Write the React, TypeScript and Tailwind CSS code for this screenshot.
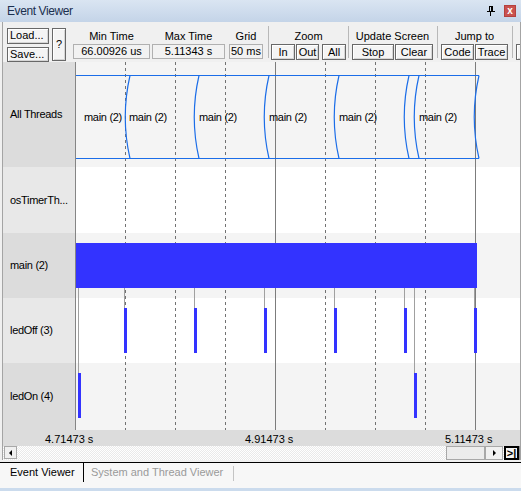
import React from 'react'

const rows = [
  { label: 'All Threads', h: 'h-[105px]', bg: 'bg-[#f4f4f4]', lbg: 'bg-[#dcdcdc]' },
  { label: 'osTimerTh...', h: 'h-[66px]', bg: 'bg-white', lbg: 'bg-[#e8e8e8]' },
  { label: 'main (2)', h: 'h-[65px]', bg: 'bg-[#f4f4f4]', lbg: 'bg-[#dcdcdc]' },
  { label: 'ledOff (3)', h: 'h-[65px]', bg: 'bg-white', lbg: 'bg-[#e8e8e8]' },
  { label: 'ledOn (4)', h: 'h-[67px]', bg: 'bg-[#f4f4f4]', lbg: 'bg-[#dcdcdc]' },
]

// plot coordinates, origin at the top-left of the timeline area
const dashed = [49, 99, 149, 249, 299, 349]
const solid = [199, 399]
const switches = [49, 118, 188, 258, 328, 338, 398]
const mainLabels = [8, 53, 123, 193, 263, 343]
const ledOff = [48, 118, 188, 258, 328, 398]
const ledOn = [2, 338]

function Btn({ children, className = '' }: { children?: React.ReactNode; className?: string }) {
  return (
    <div
      className={`flex h-[16px] items-center justify-center border border-[#686868] bg-[#f4f4f4] text-[11px] leading-none text-black shadow-[inset_1px_1px_0_#ffffff,inset_-1px_-1px_0_#d6d6d6] ${className}`}
    >
      {children}
    </div>
  )
}

function Field({ children, className = '' }: { children: React.ReactNode; className?: string }) {
  return (
    <div
      className={`flex h-[15px] items-center justify-center border border-[#b0b0b0] bg-[#f2f2f2] text-[11px] leading-none text-black ${className}`}
    >
      {children}
    </div>
  )
}

function Group({ title, children }: { title: string; children: React.ReactNode }) {
  return (
    <div className="flex flex-col items-center pt-[7px]">
      <div className="h-[14px] whitespace-nowrap text-[11px] leading-[14px] text-black">{title}</div>
      <div className="mt-[1px] flex">{children}</div>
    </div>
  )
}

function Sep({ className = '' }: { className?: string }) {
  return <div className={`my-[4px] w-px shrink-0 bg-[#b8b8b8] ${className}`} />
}

function Timeline() {
  return (
    <svg className="absolute inset-0" width="443" height="368" fontFamily="'Liberation Sans', Arial, sans-serif">
      {dashed.map((x) => (
        <line key={x} x1={x + 0.5} y1={0} x2={x + 0.5} y2={368} stroke="#727272" strokeDasharray="3 3" />
      ))}
      {solid.map((x) => (
        <line key={x} x1={x + 0.5} y1={0} x2={x + 0.5} y2={368} stroke="#7c7c7c" />
      ))}

      {/* All Threads strip */}
      <line x1={0} y1={13.5} x2={403} y2={13.5} stroke="#1b6de8" />
      <line x1={0} y1={96.5} x2={403} y2={96.5} stroke="#1b6de8" />
      {switches.map((e) => (
        <path key={e} d={`M${e + 5} 13.5 Q${e - 4.5} 55 ${e + 5} 96.5`} fill="none" stroke="#1b6de8" strokeWidth="1.2" />
      ))}
      {mainLabels.map((x) => (
        <text key={x} x={x} y={55} fontSize="11" letterSpacing="-0.3" dominantBaseline="central" fill="#000">
          main (2)
        </text>
      ))}

      {/* connectors */}
      {ledOff.map((x) => (
        <line key={x} x1={x + 0.5} y1={226} x2={x + 0.5} y2={246} stroke="#a0a0a0" />
      ))}
      {ledOn.map((x) => (
        <line key={x} x1={x + 0.5} y1={226} x2={x + 0.5} y2={311} stroke="#a0a0a0" />
      ))}

      <rect x={0} y={181} width={401} height={45} fill="#3333ff" />
      {ledOff.map((x) => (
        <rect key={x} x={x} y={246} width={3} height={45} fill="#3333ff" />
      ))}
      {ledOn.map((x) => (
        <rect key={x} x={x} y={311} width={3} height={45} fill="#3333ff" />
      ))}
    </svg>
  )
}

export default function App() {
  return (
    <div className="flex h-[491px] w-[521px] flex-col overflow-hidden bg-[#f0f0f0] font-['Liberation_Sans',Arial,sans-serif]">
      {/* title bar */}
      <div className="flex h-[22px] shrink-0 items-center bg-[linear-gradient(#dae5f2,#c4d4e8)] pl-[7px] pr-[5px]">
        <div className="flex-1 text-[12px] tracking-[-0.4px] text-[#1b2f4e]">Event Viewer</div>
        <svg width="8" height="10" viewBox="0 0 8 10" className="mr-[9px]">
          <rect x="2.5" y="0.5" width="3" height="5" fill="none" stroke="#000" />
          <rect x="4" y="0" width="2" height="6" fill="#000" />
          <rect x="0" y="5" width="8" height="1" fill="#000" />
          <rect x="3" y="6" width="1" height="4" fill="#000" />
        </svg>
        <div className="flex h-[12px] w-[12px] items-center justify-center border border-[#b5403d] bg-[#c9524f] text-[10px] font-bold leading-none text-white">
          x
        </div>
      </div>

      <div className="ml-[2px] flex h-[438px] shrink-0 flex-col border-x border-[#a4a4a4]">
        {/* toolbar */}
        <div className="flex h-[40px] shrink-0 overflow-hidden">
          <div className="ml-[4px] flex w-[42px] shrink-0 flex-col gap-[3px] pt-[6px]">
            <Btn className="h-[15px] justify-start pl-[2px]">Load...</Btn>
            <Btn className="h-[15px] justify-start pl-[2px]">Save...</Btn>
          </div>
          <div className="ml-[3px] pt-[6px]">
            <Btn className="h-[33px] w-[14px]">?</Btn>
          </div>

          <div className="ml-[7px]">
            <Group title="Min Time">
              <Field className="w-[77px]">66.00926 us</Field>
            </Group>
          </div>
          <div className="ml-[2px]">
            <Group title="Max Time">
              <Field className="w-[73px]">5.11343 s</Field>
            </Group>
          </div>
          <div className="ml-[4px]">
            <Group title="Grid">
              <Field className="w-[34px] justify-start pl-[1px]">50 ms</Field>
            </Group>
          </div>
          <Sep className="ml-[5px]" />

          <div className="ml-[2px]">
            <Group title="Zoom">
              <Btn className="w-[24px]">In</Btn>
              <Btn className="ml-[1px] w-[23px]">Out</Btn>
              <Btn className="ml-[3px] w-[24px]">All</Btn>
            </Group>
          </div>
          <Sep className="ml-[2px]" />

          <div className="ml-[3px]">
            <Group title="Update Screen">
              <Btn className="w-[42px]">Stop</Btn>
              <Btn className="ml-[1px] w-[38px]">Clear</Btn>
            </Group>
          </div>
          <Sep className="ml-[4px]" />

          <div className="ml-[3px]">
            <Group title="Jump to">
              <Btn className="w-[33px]">Code</Btn>
              <Btn className="ml-[1px] w-[33px]">Trace</Btn>
            </Group>
          </div>
          <Sep className="ml-[4px]" />
          <div className="ml-[3px] flex shrink-0 flex-col pt-[22px]">
            <Btn className="w-[20px]" />
          </div>
        </div>

        {/* chart */}
        <div className="flex h-[368px] shrink-0">
          <div className="flex w-[73px] shrink-0 flex-col border-r border-[#858585]">
            {rows.map((r) => (
              <div
                key={r.label}
                className={`flex shrink-0 items-center pl-[7px] text-[11px] tracking-[-0.3px] text-black ${r.h} ${r.lbg}`}
              >
                {r.label}
              </div>
            ))}
          </div>
          <div className="relative flex-1 overflow-hidden">
            <div className="flex flex-col">
              {rows.map((r) => (
                <div key={r.label} className={`shrink-0 ${r.h} ${r.bg}`} />
              ))}
            </div>
            <Timeline />
          </div>
        </div>

        {/* time axis */}
        <div className="relative h-[16px] shrink-0 bg-[#dcdcdc] text-[11px] leading-none text-black">
          <span className="absolute left-[42px] top-[4px]">4.71473 s</span>
          <span className="absolute left-[242px] top-[4px]">4.91473 s</span>
          <span className="absolute left-[442px] top-[4px]">5.11473 s</span>
        </div>

        {/* scrollbar */}
        <div className="flex h-[14px] shrink-0 bg-[image:repeating-conic-gradient(#ffffff_0%_25%,#eaeaea_0%_50%)] bg-[length:2px_2px]">
          <div className="ml-[1px] flex h-[13px] w-[13px] items-center justify-center border border-[#a8a8a8] bg-[#f0f0f0]">
            <div className="h-0 w-0 border-y-[3px] border-r-[3px] border-y-transparent border-r-black" />
          </div>
          <div className="flex-1" />
          <div className="h-[14px] w-[39px] border border-[#a8a8a8] bg-[#ececec]" />
          <div className="flex h-[14px] w-[18px] items-center justify-center border border-[#a8a8a8] bg-[#f0f0f0]">
            <div className="h-0 w-0 border-y-[3px] border-l-[3px] border-y-transparent border-l-black" />
          </div>
          <div className="ml-[1px] flex h-[14px] w-[15px] items-center justify-center border-2 border-black bg-[#f4f4f4] text-[11px] font-bold leading-none text-black">
            &gt;|
          </div>
          <div className="w-[1px] bg-[#8a8a8a]" />
        </div>
      </div>

      {/* tabs */}
      <div className="h-[2px] shrink-0" />
      <div className="h-px shrink-0 bg-black" />
      <div className="flex h-[25px] shrink-0 bg-[#f7f7f7] text-[11px]">
        <div className="flex h-[19px] w-[84px] items-center border-r border-black pl-[10px] text-black">Event Viewer</div>
        <div className="flex h-[19px] items-center pl-[7px] text-[#9a9a9a]">System and Thread Viewer</div>
        <div className="ml-[10px] mt-[3px] h-[15px] w-px bg-[#c4c4c4]" />
      </div>
      <div className="h-[3px] shrink-0 bg-[#cbdbed]" />
    </div>
  )
}
